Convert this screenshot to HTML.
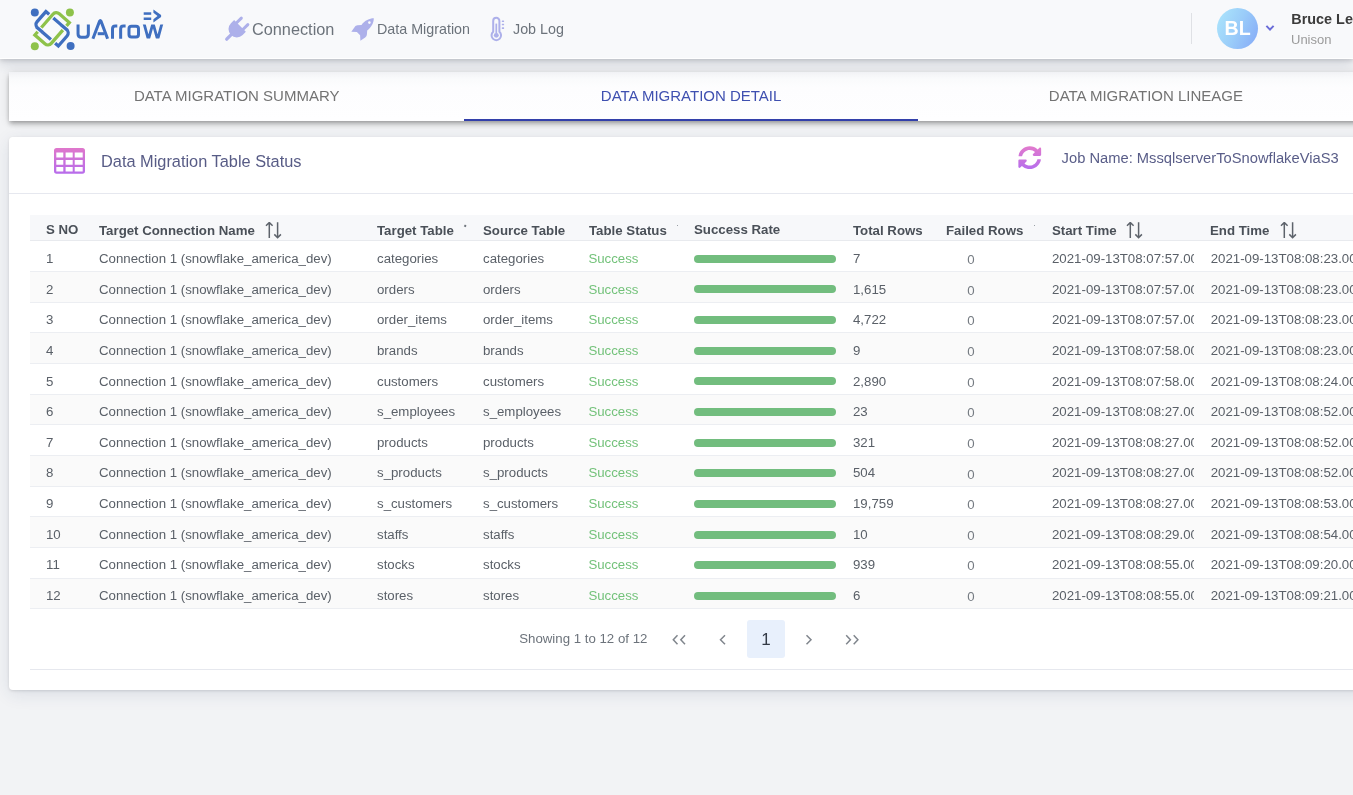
<!DOCTYPE html>
<html><head><meta charset="utf-8">
<style>
*{margin:0;padding:0;box-sizing:border-box}
html,body{width:1353px;height:795px;overflow:hidden;background:#f2f3f5;font-family:"Liberation Sans",sans-serif}
.abs{position:absolute}
.t{position:absolute;white-space:nowrap}
#hdr{position:absolute;left:0;top:0;width:1353px;height:59px;background:#f8f9fb;border-bottom:1px solid #fff;box-shadow:0 2px 4px rgba(0,0,0,.12),0 6px 12px rgba(40,55,90,.14);z-index:5}
.nav{color:#6c737b}
#tabs{position:absolute;left:9px;top:72px;width:1364px;height:49px;background:linear-gradient(#f5f6f8 0px,#fafbfc 8px,#fdfdfe 15px,#fefeff 49px);box-shadow:0 2px 4px -1px rgba(0,0,0,.25),0 4px 5px 0 rgba(0,0,0,.14),0 1px 10px 0 rgba(0,0,0,.12)}
.tab{position:absolute;top:15.75px;font-size:15px;line-height:15px;color:#737373;white-space:nowrap}
#ink{position:absolute;left:455px;top:47px;width:454px;height:2px;background:#3340aa}
#card{position:absolute;left:9px;top:137px;width:1364px;height:553px;background:#fff;border-radius:4px;box-shadow:0 1px 3px rgba(0,0,0,.12),0 4px 18px rgba(30,55,100,.11)}
#chdr{position:absolute;left:0;top:56px;width:1364px;height:1px;background:#e6e8ef}
#thead{position:absolute;left:30px;top:215px;width:1330px;height:26px;background:#f7f8fa;border-bottom:1px solid #e8eaee}
.h{position:absolute;top:224.2px;font-size:13.25px;line-height:13.28px;font-weight:bold;color:#4a5058;white-space:nowrap}
.row{position:absolute;left:30px;width:1330px;height:30.65px;border-bottom:1px solid #eceef2;background:#fff}
.row.even{background:#fafafa}
.c{position:absolute;top:10.5px;font-size:13.25px;line-height:13.28px;color:#5a6068;white-space:nowrap}
.row .c{margin-left:-30px}
.ok{color:#73c27a}
.z{color:#757b82;top:11.6px}
.clip{width:142.3px;overflow:hidden}
.bar{position:absolute;left:664px;top:13.4px;width:142px;height:8px;border-radius:4px;background:#72bd7e}
.sort{position:absolute;top:222px}
</style></head><body>
<div id="root" style="position:absolute;left:0;top:0;width:1353px;height:795px;overflow:hidden;will-change:transform">
<div id="hdr">
  <!-- logo -->
  <svg class="abs" style="left:28px;top:6px" width="50" height="48" viewBox="0 0 50 48">
    <circle cx="6.8" cy="6.5" r="4" fill="#3f6fc0"/>
    <circle cx="41.9" cy="6.45" r="4" fill="#8ec24a"/>
    <circle cx="6.8" cy="40.2" r="4" fill="#8ec24a"/>
    <circle cx="42.6" cy="39.9" r="4" fill="#3f6fc0"/>
    <g transform="translate(24.1 22.8) rotate(41)"><path d="M-16 -8.9 H11.5 A4.5 4.5 0 0 1 16 -4.4 V8.9 H-11.5 A4.5 4.5 0 0 1 -16 4.4 Z" fill="none" stroke="#3f6fc0" stroke-width="3.3"/></g>
    <g transform="translate(24.1 22.8) rotate(-49)"><path d="M-16 -8.9 H11.5 A4.5 4.5 0 0 1 16 -4.4 V8.9 H-11.5 A4.5 4.5 0 0 1 -16 4.4 Z" fill="none" stroke="#f8f9fb" stroke-width="5.6"/><path d="M-16 -8.9 H11.5 A4.5 4.5 0 0 1 16 -4.4 V8.9 H-11.5 A4.5 4.5 0 0 1 -16 4.4 Z" fill="none" stroke="#8ec24a" stroke-width="3.3"/></g>
    <g transform="translate(24.1 22.8) rotate(41)" fill="none">
      <path d="M-12.6 8.9 H-5.2 M5.2 -8.9 H12.6" stroke="#f8f9fb" stroke-width="5.6"/>
      <path d="M-13 8.9 H-4.8 M4.8 -8.9 H13" stroke="#3f6fc0" stroke-width="3.3"/>
    </g>
  </svg>
  <svg class="abs" style="left:74px;top:6px" width="94" height="40" viewBox="74 6 94 40">
    <defs><clipPath id="wc"><rect x="140" y="24.6" width="26" height="14"/></clipPath></defs>
    <g fill="none" stroke="#3f6fc0" stroke-width="3">
      <path d="M78.05 24.5 V34 Q78.05 37.2 81.25 37.2 H85.15 Q88.35 37.2 88.35 34 V24.5"/>
      <path d="M92.9 38.7 L99.6 21.2 Q100.3 19.8 101 21.2 L107.6 38.7"/>
      <path d="M97.7 33.7 H104.6"/>
      <path d="M112.5 38.7 V28.9 Q112.5 26 115.4 26 H117.3"/>
      <path d="M120.65 38.7 V28.9 Q120.65 26 123.55 26 H125.6"/>
      <rect x="129" y="26.2" width="9.5" height="10.8" rx="2.5"/>
      <g clip-path="url(#wc)" stroke-width="2.8" stroke-linejoin="miter"><path d="M143.5 21.5 L148.4 39.6 L153 23.2 L157.6 39.6 L162.5 21.5"/></g>
    </g>
    <g fill="#3f6fc0">
      <rect x="143.7" y="12.3" width="7.5" height="2.5"/>
      <rect x="143.7" y="17.5" width="7.5" height="2.5"/>
      <path d="M153.4 9.4 L161.1 15.1 L161.1 16.9 L153.4 22.5 L153.4 19.2 L157.5 16 L153.4 12.8 Z"/>
    </g>
  </svg>
  <!-- plug -->
  <svg class="abs" style="left:222px;top:14px" width="30" height="30" viewBox="222 14 30 30">
    <g transform="translate(235.6 30.3) rotate(45) translate(0 -14.2)" fill="#adb0ea">
      <rect x="-6.1" y="0" width="3" height="10" rx="1.5"/>
      <rect x="3.1" y="0" width="3" height="10" rx="1.5"/>
      <path d="M-8.3 8 H8.3 V12.5 A8.3 8.3 0 0 1 -8.3 12.5 Z"/>
      <rect x="-1.65" y="18" width="3.3" height="10.4" rx="1.65"/>
    </g>
  </svg>
  <span class="t nav" style="left:252px;top:20.9px;font-size:16.3px;line-height:16px">Connection</span>
  <!-- rocket -->
  <svg class="abs" style="left:349px;top:16px" width="28" height="28" viewBox="349 16 28 28">
    <g fill="#adb0ea">
      <path d="M373.8 18.3 C369.5 18.3 364.8 20.5 361.5 25 L357.5 25.3 C356.4 25.4 355.3 26 354.7 27 L351.3 31.8 L356.9 32.1 L360.1 35.3 L360.4 40.8 L365.2 37.5 C366.2 36.8 366.8 35.8 366.9 34.6 L367.2 30.6 C371.6 27.3 373.8 22.6 373.8 18.3 Z"/>
      <circle cx="369.4" cy="22.6" r="1.3" fill="#f8f9fb"/>
    </g>
  </svg>
  <span class="t nav" style="left:377px;top:22.2px;font-size:14.3px;line-height:14px">Data Migration</span>
  <!-- thermometer -->
  <svg class="abs" style="left:486px;top:14px" width="22" height="30" viewBox="486 14 22 30">
    <path d="M493.2 31.8 V20.9 A3.1 3.1 0 0 1 499.4 20.9 V31.8 A4.75 4.75 0 1 1 493.2 31.8 Z" fill="none" stroke="#adb0ea" stroke-width="2"/>
    <rect x="495.45" y="23.6" width="1.7" height="10" fill="#adb0ea"/>
    <circle cx="496.3" cy="35.35" r="2.45" fill="#adb0ea"/>
    <g fill="#adb0ea"><rect x="501.8" y="20.4" width="2.3" height="1.7" rx=".5"/><rect x="501.8" y="23.75" width="2.3" height="1.6" rx=".5"/><rect x="501.8" y="27.2" width="2.3" height="1.7" rx=".5"/></g>
  </svg>
  <span class="t nav" style="left:513px;top:22.4px;font-size:14.3px;line-height:14px">Job Log</span>
  <!-- right -->
  <div class="abs" style="left:1191px;top:13px;width:1px;height:31px;background:#dfe1e5"></div>
  <div class="abs" style="left:1216.8px;top:7.9px;width:41px;height:41px;border-radius:50%;background:linear-gradient(115deg,#ade7fc 0%,#9accf9 50%,#84a8f7 100%)"></div>
  <span class="t" style="left:1224.5px;top:19.4px;font-size:19.6px;line-height:18px;font-weight:bold;color:#fff">BL</span>
  <svg class="abs" style="left:1264px;top:23px" width="12" height="10" viewBox="0 0 12 10"><path d="M2.4 2.9 L6 6.6 L9.6 2.9" fill="none" stroke="#6a6cd8" stroke-width="2"/></svg>
  <span class="t" style="left:1291.3px;top:11.6px;font-size:14.4px;line-height:14px;font-weight:bold;color:#3b3b3b">Bruce Lee</span>
  <span class="t" style="left:1291px;top:32.7px;font-size:13px;line-height:13px;color:#9b9b9b">Unison</span>
</div>

<div id="tabs">
  <span class="tab" style="left:124.9px">DATA MIGRATION SUMMARY</span>
  <span class="tab" style="left:591.8px;color:#3f50b0">DATA MIGRATION DETAIL</span>
  <span class="tab" style="left:1039.8px">DATA MIGRATION LINEAGE</span>
  <div id="ink"></div>
</div>

<div id="card">
  <div id="chdr"></div>
</div>
<!-- table icon -->
<svg class="abs" style="left:54px;top:148px" width="31" height="26" viewBox="0 0 31 26">
  <defs><linearGradient id="gp" x1="0" y1="0" x2="0" y2="1"><stop offset="0" stop-color="#df77cb"/><stop offset="1" stop-color="#b76ceb"/></linearGradient></defs>
  <path fill="url(#gp)" fill-rule="evenodd" d="M2.6 0 H28.4 Q31 0 31 2.6 V23.1 Q31 25.7 28.4 25.7 H2.6 Q0 25.7 0 23.1 V2.6 Q0 0 2.6 0 Z
  M2.3 4.6 V9.4 H9.3 V4.6 Z M11.6 4.6 V9.4 H18.7 V4.6 Z M20.7 4.6 V9.4 H28.7 V4.6 Z
  M2.3 11.9 V16.7 H9.3 V11.9 Z M11.6 11.9 V16.7 H18.7 V11.9 Z M20.7 11.9 V16.7 H28.7 V11.9 Z
  M2.3 18.9 V23.5 H9.3 V18.9 Z M11.6 18.9 V23.5 H18.7 V18.9 Z M20.7 18.9 V23.5 H28.7 V18.9 Z"/>
</svg>
<span class="t" style="left:101px;top:153.4px;font-size:16.35px;line-height:16px;color:#585c86">Data Migration Table Status</span>
<!-- refresh icon -->
<svg class="abs" style="left:1018.1px;top:145.6px" width="23.5" height="23.5" viewBox="0 0 512 512">
  <defs><linearGradient id="gp2" gradientUnits="userSpaceOnUse" x1="0" y1="8" x2="0" y2="504"><stop offset="0" stop-color="#e27acd"/><stop offset="1" stop-color="#b66eec"/></linearGradient></defs>
  <path fill="url(#gp2)" d="M370.72 133.28C339.458 104.008 298.888 87.962 255.848 88c-77.458.068-144.328 53.178-162.791 126.85-1.344 5.363-6.122 9.15-11.651 9.15H24.103c-7.498 0-13.194-6.807-11.807-14.176C33.933 94.924 134.813 8 256 8c66.448 0 126.791 26.136 171.315 68.685L463.03 40.97C478.149 25.851 504 36.559 504 57.941V192c0 13.255-10.745 24-24 24H345.941c-21.382 0-32.090-25.851-16.971-40.971l41.750-41.749zM32 296h134.059c21.382 0 32.090 25.851 16.971 40.971l-41.750 41.750c31.262 29.273 71.835 45.319 114.876 45.280 77.418-.070 144.315-53.144 162.787-126.849 1.344-5.363 6.122-9.150 11.651-9.150h57.304c7.498 0 13.194 6.807 11.807 14.176C478.067 417.076 377.187 504 256 504c-66.448 0-126.791-26.136-171.315-68.685L48.970 471.030C33.851 486.149 8 475.441 8 454.059V320c0-13.255 10.745-24 24-24z"/>
</svg>
<span class="t" style="left:1061.6px;top:151.2px;font-size:14.72px;line-height:14.72px;color:#595d88">Job Name: MssqlserverToSnowflakeViaS3</span>

<div id="thead"></div>
<span class="h" style="left:46px;top:223.3px">S NO</span>
<span class="h" style="left:99px">Target Connection Name</span>
<span class="h" style="left:377px">Target Table</span>
<span class="h" style="left:483px">Source Table</span>
<span class="h" style="left:589px">Table Status</span>
<span class="h" style="left:694px;top:223.3px">Success Rate</span>
<span class="h" style="left:853px">Total Rows</span>
<span class="h" style="left:946px">Failed Rows</span>
<span class="h" style="left:1052px">Start Time</span>
<span class="h" style="left:1210px">End Time</span>
<svg class="sort" style="left:263px" width="22" height="18" viewBox="0 0 22 18"><g fill="none" stroke="#5d636b" stroke-width="1.5"><path d="M6.3 16 V0.6 M3 3.8 L6.3 0.5 L9.6 3.8"/><path d="M14.6 0.2 V15.6 M11.3 12.4 L14.6 15.7 L17.9 12.4"/></g></svg>
<svg class="sort" style="left:1124px" width="22" height="18" viewBox="0 0 22 18"><g fill="none" stroke="#5d636b" stroke-width="1.5"><path d="M6.3 16 V0.6 M3 3.8 L6.3 0.5 L9.6 3.8"/><path d="M14.6 0.2 V15.6 M11.3 12.4 L14.6 15.7 L17.9 12.4"/></g></svg>
<svg class="sort" style="left:1278px" width="22" height="18" viewBox="0 0 22 18"><g fill="none" stroke="#5d636b" stroke-width="1.5"><path d="M6.3 16 V0.6 M3 3.8 L6.3 0.5 L9.6 3.8"/><path d="M14.6 0.2 V15.6 M11.3 12.4 L14.6 15.7 L17.9 12.4"/></g></svg>
<div class="abs" style="left:464.3px;top:224.6px;width:2px;height:1.5px;background:#6a7078;transform:rotate(-55deg)"></div>
<div class="abs" style="left:677px;top:225px;width:1px;height:1px;background:#9aa0a6"></div>
<div class="abs" style="left:1033.5px;top:225px;width:1px;height:1px;background:#9aa0a6"></div>

<div class="row" style="top:241.40px"><span class="c" style="left:46px">1</span><span class="c" style="left:99px">Connection 1 (snowflake_america_dev)</span><span class="c" style="left:377px">categories</span><span class="c" style="left:483px">categories</span><span class="c ok" style="left:588.4px">Success</span><span class="bar"></span><span class="c" style="left:853px">7</span><span class="c z" style="left:967.2px">0</span><span class="c clip" style="left:1052px">2021-09-13T08:07:57.000</span><span class="c" style="left:1210.7px">2021-09-13T08:08:23.000</span></div>
<div class="row even" style="top:272.05px"><span class="c" style="left:46px">2</span><span class="c" style="left:99px">Connection 1 (snowflake_america_dev)</span><span class="c" style="left:377px">orders</span><span class="c" style="left:483px">orders</span><span class="c ok" style="left:588.4px">Success</span><span class="bar"></span><span class="c" style="left:853px">1,615</span><span class="c z" style="left:967.2px">0</span><span class="c clip" style="left:1052px">2021-09-13T08:07:57.000</span><span class="c" style="left:1210.7px">2021-09-13T08:08:23.000</span></div>
<div class="row" style="top:302.70px"><span class="c" style="left:46px">3</span><span class="c" style="left:99px">Connection 1 (snowflake_america_dev)</span><span class="c" style="left:377px">order_items</span><span class="c" style="left:483px">order_items</span><span class="c ok" style="left:588.4px">Success</span><span class="bar"></span><span class="c" style="left:853px">4,722</span><span class="c z" style="left:967.2px">0</span><span class="c clip" style="left:1052px">2021-09-13T08:07:57.000</span><span class="c" style="left:1210.7px">2021-09-13T08:08:23.000</span></div>
<div class="row even" style="top:333.35px"><span class="c" style="left:46px">4</span><span class="c" style="left:99px">Connection 1 (snowflake_america_dev)</span><span class="c" style="left:377px">brands</span><span class="c" style="left:483px">brands</span><span class="c ok" style="left:588.4px">Success</span><span class="bar"></span><span class="c" style="left:853px">9</span><span class="c z" style="left:967.2px">0</span><span class="c clip" style="left:1052px">2021-09-13T08:07:58.000</span><span class="c" style="left:1210.7px">2021-09-13T08:08:23.000</span></div>
<div class="row" style="top:364.00px"><span class="c" style="left:46px">5</span><span class="c" style="left:99px">Connection 1 (snowflake_america_dev)</span><span class="c" style="left:377px">customers</span><span class="c" style="left:483px">customers</span><span class="c ok" style="left:588.4px">Success</span><span class="bar"></span><span class="c" style="left:853px">2,890</span><span class="c z" style="left:967.2px">0</span><span class="c clip" style="left:1052px">2021-09-13T08:07:58.000</span><span class="c" style="left:1210.7px">2021-09-13T08:08:24.000</span></div>
<div class="row even" style="top:394.65px"><span class="c" style="left:46px">6</span><span class="c" style="left:99px">Connection 1 (snowflake_america_dev)</span><span class="c" style="left:377px">s_employees</span><span class="c" style="left:483px">s_employees</span><span class="c ok" style="left:588.4px">Success</span><span class="bar"></span><span class="c" style="left:853px">23</span><span class="c z" style="left:967.2px">0</span><span class="c clip" style="left:1052px">2021-09-13T08:08:27.000</span><span class="c" style="left:1210.7px">2021-09-13T08:08:52.000</span></div>
<div class="row" style="top:425.30px"><span class="c" style="left:46px">7</span><span class="c" style="left:99px">Connection 1 (snowflake_america_dev)</span><span class="c" style="left:377px">products</span><span class="c" style="left:483px">products</span><span class="c ok" style="left:588.4px">Success</span><span class="bar"></span><span class="c" style="left:853px">321</span><span class="c z" style="left:967.2px">0</span><span class="c clip" style="left:1052px">2021-09-13T08:08:27.000</span><span class="c" style="left:1210.7px">2021-09-13T08:08:52.000</span></div>
<div class="row even" style="top:455.95px"><span class="c" style="left:46px">8</span><span class="c" style="left:99px">Connection 1 (snowflake_america_dev)</span><span class="c" style="left:377px">s_products</span><span class="c" style="left:483px">s_products</span><span class="c ok" style="left:588.4px">Success</span><span class="bar"></span><span class="c" style="left:853px">504</span><span class="c z" style="left:967.2px">0</span><span class="c clip" style="left:1052px">2021-09-13T08:08:27.000</span><span class="c" style="left:1210.7px">2021-09-13T08:08:52.000</span></div>
<div class="row" style="top:486.60px"><span class="c" style="left:46px">9</span><span class="c" style="left:99px">Connection 1 (snowflake_america_dev)</span><span class="c" style="left:377px">s_customers</span><span class="c" style="left:483px">s_customers</span><span class="c ok" style="left:588.4px">Success</span><span class="bar"></span><span class="c" style="left:853px">19,759</span><span class="c z" style="left:967.2px">0</span><span class="c clip" style="left:1052px">2021-09-13T08:08:27.000</span><span class="c" style="left:1210.7px">2021-09-13T08:08:53.000</span></div>
<div class="row even" style="top:517.25px"><span class="c" style="left:46px">10</span><span class="c" style="left:99px">Connection 1 (snowflake_america_dev)</span><span class="c" style="left:377px">staffs</span><span class="c" style="left:483px">staffs</span><span class="c ok" style="left:588.4px">Success</span><span class="bar"></span><span class="c" style="left:853px">10</span><span class="c z" style="left:967.2px">0</span><span class="c clip" style="left:1052px">2021-09-13T08:08:29.000</span><span class="c" style="left:1210.7px">2021-09-13T08:08:54.000</span></div>
<div class="row" style="top:547.90px"><span class="c" style="left:46px">11</span><span class="c" style="left:99px">Connection 1 (snowflake_america_dev)</span><span class="c" style="left:377px">stocks</span><span class="c" style="left:483px">stocks</span><span class="c ok" style="left:588.4px">Success</span><span class="bar"></span><span class="c" style="left:853px">939</span><span class="c z" style="left:967.2px">0</span><span class="c clip" style="left:1052px">2021-09-13T08:08:55.000</span><span class="c" style="left:1210.7px">2021-09-13T08:09:20.000</span></div>
<div class="row even" style="top:578.55px"><span class="c" style="left:46px">12</span><span class="c" style="left:99px">Connection 1 (snowflake_america_dev)</span><span class="c" style="left:377px">stores</span><span class="c" style="left:483px">stores</span><span class="c ok" style="left:588.4px">Success</span><span class="bar"></span><span class="c" style="left:853px">6</span><span class="c z" style="left:967.2px">0</span><span class="c clip" style="left:1052px">2021-09-13T08:08:55.000</span><span class="c" style="left:1210.7px">2021-09-13T08:09:21.000</span></div>

<span class="t" style="left:519.2px;top:631.5px;font-size:13.25px;line-height:13.28px;color:#6c737b">Showing 1 to 12 of 12</span>
<svg class="abs" style="left:668px;top:630.7px" width="22" height="18" viewBox="0 0 22 18"><g fill="none" stroke="#80868d" stroke-width="1.5"><path d="M9.5 4.3 L5.3 8.8 L9.5 13.3 M17 4.3 L12.8 8.8 L17 13.3"/></g></svg>
<svg class="abs" style="left:712px;top:630.7px" width="18" height="18" viewBox="0 0 18 18"><path d="M13 4.3 L8.5 8.8 L13 13.3" fill="none" stroke="#80868d" stroke-width="1.5"/></svg>
<div class="abs" style="left:746.8px;top:619.8px;width:38.2px;height:38.3px;border-radius:3px;background:#e8f0fc"></div>
<span class="t" style="left:761.3px;top:631.9px;font-size:17px;line-height:16px;color:#333a46">1</span>
<svg class="abs" style="left:800px;top:630.7px" width="18" height="18" viewBox="0 0 18 18"><path d="M6.5 4.3 L11 8.8 L6.5 13.3" fill="none" stroke="#80868d" stroke-width="1.5"/></svg>
<svg class="abs" style="left:841px;top:630.7px" width="22" height="18" viewBox="0 0 22 18"><g fill="none" stroke="#80868d" stroke-width="1.5"><path d="M5.2 4.3 L9.4 8.8 L5.2 13.3 M12.7 4.3 L16.9 8.8 L12.7 13.3"/></g></svg>
<div class="abs" style="left:30px;top:668.5px;width:1330px;height:1px;background:#e6e8ee"></div>
</div>
</body></html>
